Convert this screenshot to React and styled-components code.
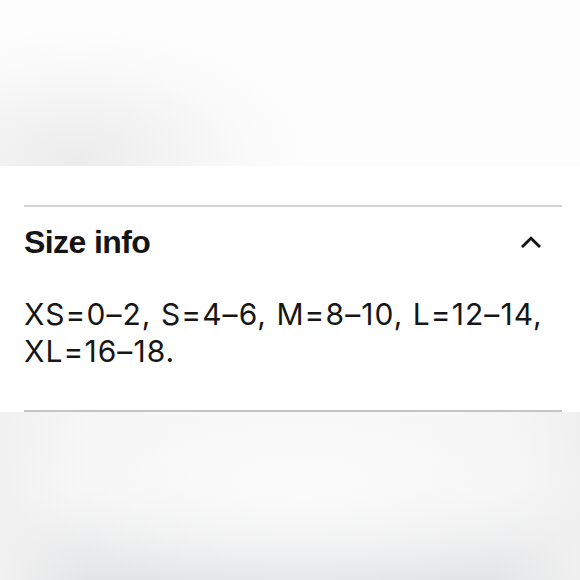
import React from 'react';
import styled, { createGlobalStyle } from 'styled-components';

const GlobalStyle = createGlobalStyle`
  html, body {
    margin: 0;
    padding: 0;
    background: #ffffff;
  }
`;

const Page = styled.div`
  width: 580px;
  height: 580px;
  display: flex;
  flex-direction: column;
  overflow: hidden;
`;

const TopBlur = styled.div`
  height: 166px;
  flex: none;
  background:
    radial-gradient(ellipse 230px 130px at 75px 160px, #ececec 0%, #f3f3f3 40%, #f9f9f9 70%, rgba(253, 253, 253, 0) 100%),
    #fdfdfd;
`;

const Panel = styled.section`
  background: #ffffff;
  padding: 39px 18px 0 24px;
`;

const Item = styled.div`
  border-top: 2px solid #d2d2d2;
  border-bottom: 2px solid #c3c5c7;
`;

const Header = styled.div`
  display: flex;
  align-items: center;
  justify-content: space-between;
  padding: 15px 21px 0 0;
`;

const Title = styled.h3`
  margin: 0;
  font-family: 'Liberation Sans', Arial, sans-serif;
  font-weight: 700;
  font-size: 32px;
  line-height: 40px;
  letter-spacing: -0.6px;
  color: #141414;
`;

const Body = styled.p`
  margin: 0;
  padding: 34px 0 40px;
  font-family: Inter, 'Liberation Sans', sans-serif;
  font-weight: 400;
  font-size: 30px;
  line-height: 37px;
  letter-spacing: 1.05px;
  color: #161616;
`;

const BottomBlur = styled.div`
  flex: 1;
  background:
    radial-gradient(ellipse 300px 110px at 300px 70px, #fbfbfb 0%, rgba(250, 250, 250, 0) 100%),
    linear-gradient(90deg, #f1f1f1 0%, rgba(248, 248, 248, 0) 15%, rgba(248, 248, 248, 0) 85%, #f0f0f0 100%),
    linear-gradient(180deg, #f6f6f6 0%, #f5f5f5 45%, #e4e5e7 100%);
`;

const Chevron = () => (
  <svg width="20" height="12" viewBox="0 0 20 12" fill="none">
    <path d="M1 11 L10 2.2 L19 11" stroke="#111" strokeWidth="2.8" />
  </svg>
);

export default function App() {
  return (
    <>
      <GlobalStyle />
      <Page>
        <TopBlur />
        <Panel>
          <Item>
            <Header>
              <Title>Size info</Title>
              <Chevron />
            </Header>
            <Body>
              XS=0–2, S=4–6, M=8–10, L=12–14,
              <br />
              XL=16–18.
            </Body>
          </Item>
        </Panel>
        <BottomBlur />
      </Page>
    </>
  );
}
